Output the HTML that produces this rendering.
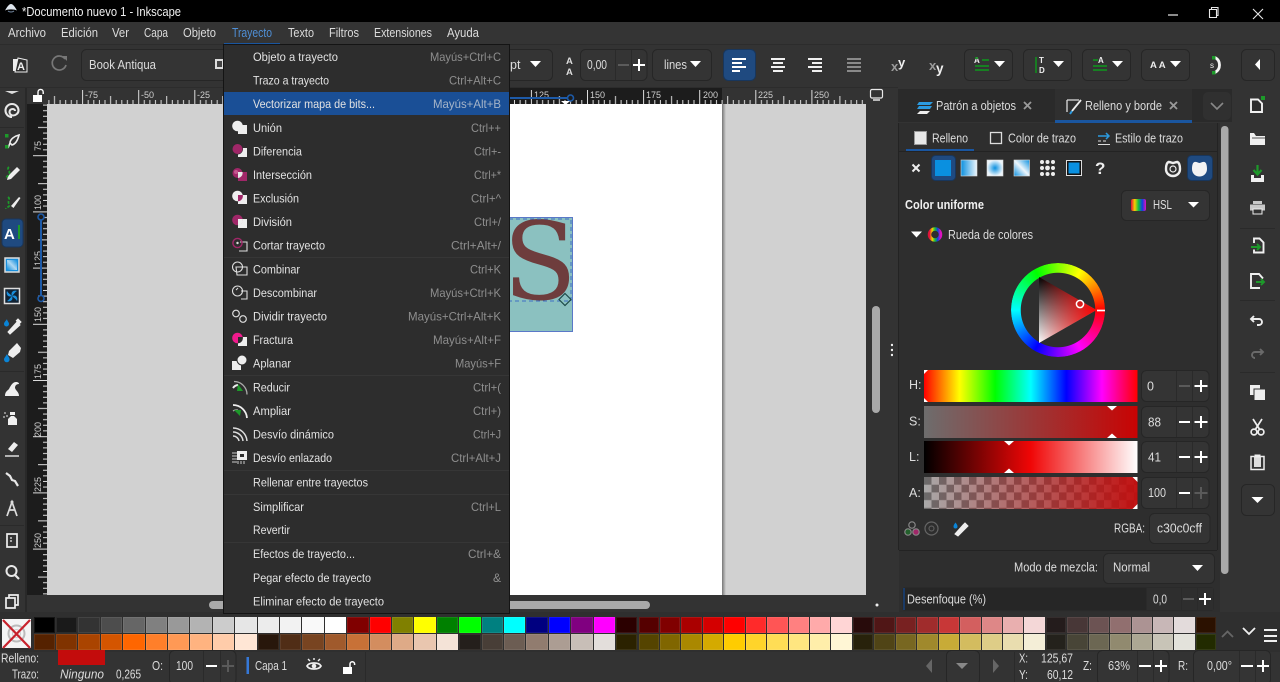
<!DOCTYPE html>
<html lang="es"><head><meta charset="utf-8"><title>Inkscape</title>
<style>
html,body{margin:0;padding:0;background:#333;width:1280px;height:682px;overflow:hidden}
svg{position:absolute;left:0;top:0;display:block}
text{font-family:"Liberation Sans",sans-serif;font-size:12.5px;fill:#dcdcdc}
.m{font-size:12.3px;fill:#e2e2e2}
.s{font-size:12px;fill:#8e8e8e;text-anchor:end}
.r{font-size:9px;fill:#cfcfcf}
.w{fill:#fff}
.l{stroke:#fff;stroke-width:2;fill:none}
.ol{stroke:#e8e8e8;stroke-width:1.3;fill:none}
.b{fill:#343434;stroke:#262626;stroke-width:1}
.sp{stroke:#2a2a2a;stroke-width:1}
.pal{position:absolute;display:flex}
.pal i{display:block;flex:1;margin:0 .5px;height:100%;box-shadow:inset 0 0 0 1px rgba(255,255,255,.08)}
</style></head><body>
<svg width="1280" height="682" viewBox="0 0 1280 682" xmlns="http://www.w3.org/2000/svg">
<defs>
<pattern id="hr" width="56.1" height="16" patternUnits="userSpaceOnUse" x="26" y="88">
<path d="M.5 2V16M6.1 12V16M11.7 12V16M17.3 12V16M22.9 12V16M28.5 8V16M34.1 12V16M39.7 12V16M45.3 12V16M50.9 12V16" stroke="#ddd" fill="none"/>
</pattern>
<pattern id="vr" width="20" height="56.2" patternUnits="userSpaceOnUse" x="27" y="99">
<path d="M6 .5H20M16 6.1H20M16 11.7H20M16 17.3H20M16 22.9H20M11 28.5H20M16 34.1H20M16 39.7H20M16 45.3H20M16 50.9H20" stroke="#ddd" fill="none"/>
</pattern>
<linearGradient id="hue"><stop offset="0" stop-color="#f00"/><stop offset=".1667" stop-color="#ff0"/><stop offset=".3333" stop-color="#0f0"/><stop offset=".5" stop-color="#0ff"/><stop offset=".6667" stop-color="#00f"/><stop offset=".8333" stop-color="#f0f"/><stop offset="1" stop-color="#f00"/></linearGradient>
<linearGradient id="sat"><stop offset="0" stop-color="#6d6d6d"/><stop offset="1" stop-color="#c80303"/></linearGradient>
<linearGradient id="lig"><stop offset="0" stop-color="#000"/><stop offset=".5" stop-color="#f00606"/><stop offset="1" stop-color="#fff"/></linearGradient>
<linearGradient id="alp"><stop offset="0" stop-color="#c30c0c" stop-opacity="0"/><stop offset="1" stop-color="#c30c0c" stop-opacity=".95"/></linearGradient>
<pattern id="chk" width="15" height="15.4" patternUnits="userSpaceOnUse" x="924" y="477">
<rect width="15" height="15.4" fill="#a9a9a9"/><rect width="7.5" height="7.7" fill="#6b6b6b"/><rect x="7.5" y="7.7" width="7.5" height="7.7" fill="#6b6b6b"/>
</pattern>
<linearGradient id="tv" x1="0" y1="0" x2="0" y2="1"><stop offset="0" stop-color="#000"/><stop offset="1" stop-color="#fff"/></linearGradient>
<linearGradient id="th"><stop offset="0" stop-color="#f00" stop-opacity="0"/><stop offset="1" stop-color="#f00"/></linearGradient>
<linearGradient id="gl"><stop offset="0" stop-color="#0a90e0"/><stop offset="1" stop-color="#eef6fc"/></linearGradient>
<radialGradient id="gr"><stop offset="0" stop-color="#0a90e0"/><stop offset="1" stop-color="#eef6fc"/></radialGradient>
<linearGradient id="gd" x1="0" y1="1" x2="1" y2="0"><stop offset="0" stop-color="#0a90e0"/><stop offset=".5" stop-color="#eef6fc"/><stop offset="1" stop-color="#0a90e0"/></linearGradient>
<linearGradient id="rb"><stop offset="0" stop-color="#e0103a"/><stop offset=".25" stop-color="#f5d000"/><stop offset=".5" stop-color="#10c040"/><stop offset=".75" stop-color="#1040e0"/><stop offset="1" stop-color="#e010c0"/></linearGradient>
<linearGradient id="sh"><stop offset="0" stop-color="#777"/><stop offset="1" stop-color="#d1d1d1"/></linearGradient>
</defs>

<rect width="1280" height="682" fill="#333"/>

<!-- canvas -->
<rect x="47" y="104" width="819" height="491" fill="#d1d1d1"/>
<rect x="400" y="104" width="322" height="491" fill="#fff"/>
<rect x="722" y="104" width="4" height="491" fill="url(#sh)"/>
<rect x="510" y="217.500" width="62" height="114" fill="#8bc1c0"/>
<path d="M509 217.500H572.500V331.500H509" fill="none" stroke="#5a78c8" stroke-width="1"/>
<text x="503" y="299" style="font-family:'DejaVu Serif',serif;font-size:108px;fill:#6e3d3d">S</text>
<path d="M509 219H571V301H509" fill="none" stroke="#3f6fc4" stroke-dasharray="4 3"/>
<path d="M565 293.500L571 299.500L565 305.500L559 299.500Z" fill="none" stroke="#1d4a48" stroke-width="1.2"/>

<!-- rulers -->
<rect x="27" y="88" width="839" height="16" fill="#333"/>
<rect x="400" y="88" width="322" height="16" fill="#1c1c1c"/>
<rect x="47" y="88" width="819" height="16" fill="url(#hr)"/>
<text class="r" x="85" y="98">-75</text><text class="r" x="141" y="98">-50</text><text class="r" x="197" y="98">-25</text>
<text class="r" x="534" y="98">125</text><text class="r" x="590" y="98">150</text><text class="r" x="646" y="98">175</text><text class="r" x="703" y="98">200</text><text class="r" x="758" y="98">225</text><text class="r" x="814" y="98">250</text>
<rect x="27" y="104" width="20" height="491" fill="#1c1c1c"/>
<rect x="27" y="104" width="20" height="491" fill="url(#vr)"/>
<g>
<text class="r" transform="translate(41 151) rotate(-90)">75</text>
<text class="r" transform="translate(41 210) rotate(-90)">100</text>
<text class="r" transform="translate(41 266) rotate(-90)">125</text>
<text class="r" transform="translate(41 322) rotate(-90)">150</text>
<text class="r" transform="translate(41 379) rotate(-90)">175</text>
<text class="r" transform="translate(41 437) rotate(-90)">200</text>
<text class="r" transform="translate(41 492) rotate(-90)">225</text>
<text class="r" transform="translate(41 548) rotate(-90)">250</text>
</g>
<path d="M41 217V298" stroke="#1d5aa8" stroke-width="2"/><circle cx="41" cy="217" r="3" fill="#1c1c1c" stroke="#1d5aa8" stroke-width="1.6"/><circle cx="41" cy="298.500" r="3" fill="#1c1c1c" stroke="#1d5aa8" stroke-width="1.6"/>
<path d="M500 98H568" stroke="#1d5aa8" stroke-width="2"/><circle cx="570.500" cy="98" r="3" fill="#1c1c1c" stroke="#1d5aa8" stroke-width="1.6"/>
<path d="M561 101H570L565.500 105Z" fill="#fff"/>
<!-- lock -->
<path d="M33 95h9v7h-9z" fill="#fff"/><path d="M38 95v-3a2.600 2.600 0 0 1 5.200 0v2" fill="none" stroke="#fff" stroke-width="1.4"/>
<!-- monitor -->
<rect x="870.500" y="89.500" width="12" height="8.500" rx="1.500" fill="#333" stroke="#e8e8e8" stroke-width="1.2"/><path d="M873 100h7" stroke="#e8e8e8" stroke-width="1.5"/>

<!-- canvas scrollbars -->
<rect x="866" y="104" width="27" height="500" fill="#333"/>
<rect x="872" y="306" width="8" height="107" rx="4" fill="#a9a9a9"/>
<circle cx="892" cy="345" r="1.2" fill="#eee"/><circle cx="892" cy="350" r="1.2" fill="#eee"/><circle cx="892" cy="355" r="1.2" fill="#eee"/>
<rect x="27" y="595" width="866" height="17" fill="#333"/>
<rect x="209" y="601" width="441" height="8" rx="4" fill="#a9a9a9"/>
<circle cx="877" cy="605" r="1.500" fill="#eee"/>

<!-- title bar -->
<rect width="1280" height="22" fill="#000"/>
<path d="M5 10.500C7 7 9 4 11 4s4 3 6 6.500C14 9 8 9 5 10.500Z" fill="#dfe6ee"/><path d="M8 11c2 1.400 4 1.400 6 0" stroke="#7a8fa8" fill="none"/>
<text x="22" y="16" textLength="159" lengthAdjust="spacingAndGlyphs" style="font-size:12.500px;fill:#f0f0f0">*Documento nuevo 1 - Inkscape</text>
<path d="M1168 15h10" stroke="#e8e8e8" stroke-width="1.2"/>
<path d="M1209.500 9.500h7v8h-7zM1211.500 9.500v-2h6.500v8h-2" fill="none" stroke="#e8e8e8" stroke-width="1.1"/>
<path d="M1253 9l10 10M1263 9l-10 10" stroke="#e8e8e8" stroke-width="1.1"/>

<!-- menu bar -->
<rect y="22" width="1280" height="23" fill="#343434"/>
<path d="M0 44.500H1280" stroke="#2c2c2c"/>
<g>
<text x="8" y="37" textLength="38" lengthAdjust="spacingAndGlyphs">Archivo</text>
<text x="61" y="37" textLength="37" lengthAdjust="spacingAndGlyphs">Edición</text>
<text x="112" y="37" textLength="17" lengthAdjust="spacingAndGlyphs">Ver</text>
<text x="144" y="37" textLength="24" lengthAdjust="spacingAndGlyphs">Capa</text>
<text x="183" y="37" textLength="33" lengthAdjust="spacingAndGlyphs">Objeto</text>
<text x="232" y="37" textLength="40" lengthAdjust="spacingAndGlyphs" style="fill:#4f8fd6">Trayecto</text>
<text x="288" y="37" textLength="26" lengthAdjust="spacingAndGlyphs">Texto</text>
<text x="329" y="37" textLength="30" lengthAdjust="spacingAndGlyphs">Filtros</text>
<text x="374" y="37" textLength="58" lengthAdjust="spacingAndGlyphs">Extensiones</text>
<text x="447" y="37" textLength="32" lengthAdjust="spacingAndGlyphs">Ayuda</text>
</g>

<!-- top toolbar -->
<rect y="45" width="1280" height="43" fill="#333"/>
<path d="M0 87.500H898" stroke="#2c2c2c"/>
<path d="M13 59h8v12h-8z" fill="#eee"/><path d="M18 58l9 2v12h-12z" fill="#2e2e2e" stroke="#eee"/><text x="17" y="70" style="font-size:11px;font-weight:bold;fill:#eee">A</text>
<path d="M65 59a7 7 0 1 0 1 6" fill="none" stroke="#777" stroke-width="1.7"/><path d="M62 56l5 0v5z" fill="#777"/>
<rect x="81.500" y="49.500" width="150" height="31" rx="5" class="b"/>
<text x="89" y="69" textLength="67" lengthAdjust="spacingAndGlyphs">Book Antiqua</text>
<rect x="215" y="59" width="9" height="10" fill="#ddd"/><rect x="217" y="61" width="5" height="6" fill="#444"/>
<rect x="490.500" y="49.500" width="62" height="31" rx="5" class="b"/>
<text x="510" y="69">pt</text><path d="M530 61h11l-5.500 6z" class="w"/>
<text x="566" y="64" style="font-size:9.500px;font-weight:bold;fill:#ddd">A</text><text x="566" y="75" style="font-size:9.500px;font-weight:bold;fill:#ddd">A</text>
<rect x="580.500" y="49.500" width="66.500" height="31" rx="5" class="b"/>
<path d="M615.500 50v30M631.500 50v30" class="sp"/>
<text x="587" y="69" textLength="20" lengthAdjust="spacingAndGlyphs">0,00</text>
<path d="M618 65h11" stroke="#5b5b5b" stroke-width="2"/><path d="M633 65h12M639 59v12" class="l"/>
<rect x="652.500" y="49.500" width="59" height="31" rx="5" class="b"/>
<text x="664" y="69" textLength="23" lengthAdjust="spacingAndGlyphs">lines</text><path d="M690 61h11l-5.500 6z" class="w"/>
<rect x="723.500" y="49.500" width="32" height="31" rx="5" fill="#1f4a80" stroke="#18365c"/>
<path d="M732 59h14M732 63h10M732 67h14M732 71h8" style="stroke:#fff;stroke-width:1.900px"/>
<path d="M771 59h14M773 63h10M771 67h14M773 71h10" style="stroke:#f0f0f0;stroke-width:1.900px"/>
<path d="M808 59h14M812 63h10M808 67h14M812 71h10" style="stroke:#f0f0f0;stroke-width:1.900px"/>
<path d="M847 59h14M847 63h14M847 67h14M847 71h14" style="stroke:#8a8a8a;stroke-width:1.900px"/>
<text x="891" y="71" style="font-size:13px;font-weight:bold;fill:#9a9a9a">x</text><text x="898" y="67" style="font-size:13px;font-weight:bold;fill:#f0f0f0">y</text>
<text x="929" y="70" style="font-size:13px;font-weight:bold;fill:#9a9a9a">x</text><text x="936" y="73" style="font-size:13.500px;font-weight:bold;fill:#f0f0f0">y</text>
<g>
<rect x="964.500" y="49.500" width="48" height="31" rx="5" class="b"/><text x="974" y="63" style="font-size:8px;font-weight:bold;fill:#eee">A</text><path d="M975 58h3M982 60h7M975 66h14M975 70h14" stroke="#138a1f" stroke-width="1.700"/><path d="M994 61h11l-5.500 6z" class="w"/>
<rect x="1023.500" y="49.500" width="48" height="31" rx="5" class="b"/><text x="1039" y="63" style="font-size:8px;font-weight:bold;fill:#eee">T</text><text x="1039" y="73" style="font-size:8px;font-weight:bold;fill:#eee">D</text><path d="M1036 57v16" stroke="#138a1f" stroke-width="1.700"/><path d="M1053 61h11l-5.500 6z" class="w"/>
<rect x="1082.500" y="49.500" width="48" height="31" rx="5" class="b"/><text x="1098" y="63" style="font-size:8px;font-weight:bold;fill:#eee">A</text><path d="M1093 60h5M1093 66h14M1093 70h14" stroke="#138a1f" stroke-width="1.700"/><path d="M1112 61h11l-5.500 6z" class="w"/>
<rect x="1141.500" y="49.500" width="48" height="31" rx="5" class="b"/><text x="1150" y="68" style="font-size:9.500px;font-weight:bold;fill:#eee">A A</text><path d="M1170 61h11l-5.500 6z" class="w"/>
</g>
<path d="M1215 57.500a8.500 8.500 0 0 1 0 15" fill="none" stroke="#f5f5f5" stroke-width="2.800"/><rect x="1212" y="56" width="3.500" height="3.500" fill="#1d9a2a"/><rect x="1212" y="71" width="3.500" height="3.500" fill="#1d9a2a"/><text x="1210" y="68" style="font-size:8px;fill:#eee">s</text>
<rect x="1241.500" y="49.500" width="33" height="31" rx="5" class="b"/><path d="M1260 59v11l-5-5.500z" class="w"/>

<!-- left toolbar -->
<rect y="88" width="25" height="524" fill="#333"/>
<rect x="25" y="88" width="2" height="524" fill="#292929"/>
<path d="M0 127.500H24M0 371.500H24M0 525.500H24" class="sp"/>
<path d="M5 91h14l-7 3z" fill="#ddd"/>
<path d="M12 117a6.500 6.500 0 1 1 6.500-6.500c0 3-3 5-5.500 5a3.500 3.500 0 0 1-3.500-3.500c0-2 1.500-3 3.500-3a2 2 0 0 1 2 2" fill="none" stroke="#e8e8e8" stroke-width="2.100"/>
<path d="M10 143c0-4 5-7 9-8-1 4-3 9-7 10zM10 143l-2 5" fill="none" stroke="#eee" stroke-width="1.600"/><rect x="5" y="134" width="3.500" height="3.500" fill="#1d9a2a"/><rect x="5" y="145" width="3.500" height="3.500" fill="#1d9a2a"/>
<path d="M8 176l9-9 3 3-9 9-4 1z" fill="#eee"/><path d="M9 167c-3 2 2 4 0 7s-3 3-3 5" fill="none" stroke="#1d9a2a" stroke-width="1.800" stroke-dasharray="3 1.500"/>
<path d="M11 206l8-9 1.500 1-7 10z" fill="#eee"/><path d="M8 197c3 2-1 4 1 7s-3 3-3 5" fill="none" stroke="#1d9a2a" stroke-width="1.800" stroke-dasharray="3 1.500"/>
<rect x="2" y="219" width="21" height="28" rx="4" fill="#1f4a80" stroke="#18365c"/>
<text x="4" y="239" style="font-size:15px;font-weight:bold;fill:#fff">A</text><path d="M19 225v14" stroke="#1d9a2a" stroke-width="2"/>
<rect x="5" y="258" width="14" height="14" fill="#1a8fdc" stroke="#ddd" stroke-width="1.500"/><rect x="7" y="260" width="10" height="10" fill="url(#gd)" opacity=".7"/>
<rect x="4.500" y="288.500" width="15" height="15" fill="#123" stroke="#ddd" stroke-width="1.500"/><path d="M12 296c-2-5 3-6 5-5-2 1-3 3-5 5zM12 296c5-2 6 3 5 5-1-2-3-3-5-5zM12 296c2 5-3 6-5 5 2-1 3-3 5-5zM12 296c-5 2-6-3-5-5 1 2 3 3 5 5z" fill="#1a8fdc"/>
<path d="M8 332l9-10 3 3-10 9zM16 321l2-2 3 3-2 2" fill="#eee" stroke="#eee"/><path d="M7 319c-1 2-3 3-3 5a2.500 2.500 0 0 0 5 0c0-2-2-3-2-5z" fill="#0a84d6"/>
<path d="M9 351l8-8 4 5-1 4-7 6-5-3z" fill="#eee"/><path d="M7 354c-1 2-3 4-3 5.500a2.800 2.800 0 0 0 5.600 0c0-2-2-3.500-2.600-5.500z" fill="#0a84d6"/>
<path d="M5 396c0-4 2-5 4-7 2-4 4-7 7-7 2 0 3 1 3 2-3 0-4 2-4 4 1 3 4 4 4 8z" fill="#f0f0f0"/>
<path d="M8 425v-6l3-3h3l3 3v6z" fill="#f0f0f0"/><rect x="10" y="412" width="5" height="3" fill="#f0f0f0"/><path d="M4 413h2M3 417h2M6 416h2" stroke="#aaa" stroke-width="1.500"/>
<path d="M8 449l6-7 4 3-6 7z" fill="#eee"/><path d="M5 456h14" stroke="#ddd" stroke-width="1.500"/>
<path d="M6 473l4 3 2 4 3 1 3 5" fill="none" stroke="#e8e8e8" stroke-width="2.200"/>
<path d="M7 516l5-14 5 14M9 510h6" fill="none" stroke="#ddd" stroke-width="1.700"/><circle cx="12" cy="502" r="1.500" fill="#ddd"/>
<path d="M7 534h10v13H7z" fill="none" stroke="#eee" stroke-width="1.700"/><path d="M10 538h2M10 541h2" stroke="#eee" stroke-width="1.300"/>
<circle cx="11.500" cy="571" r="5" fill="none" stroke="#e8e8e8" stroke-width="2"/><path d="M15 575l4 4" stroke="#e8e8e8" stroke-width="2.200"/>
<path d="M6 598h9v10H6z" fill="none" stroke="#eee" stroke-width="1.700"/><path d="M9 598v-3h9v10h-3" fill="none" stroke="#eee" stroke-width="1.700"/>

<!-- dock -->
<rect x="893" y="88" width="5" height="524" fill="#333"/>
<rect x="898" y="89" width="334" height="33" fill="#2a2a2a"/>
<rect x="1055" y="89" width="137" height="31" fill="#2f2f2f"/>
<rect x="1055" y="120" width="137" height="3" fill="#1a56a0"/>
<path d="M919 102h14l-3 3h-13zM919 106h13l-2 3h-13z" fill="#2c9be0"/><path d="M920 111h10l-3 3h-10z" fill="#eee"/>
<text x="936" y="110" textLength="80" lengthAdjust="spacingAndGlyphs">Patrón a objetos</text>
<path d="M1024 102l7 7M1031 102l-7 7" stroke="#9a9a9a" stroke-width="1.800"/>
<path d="M1067 100h12M1067 100v12" fill="none" stroke="#ddd" stroke-width="1.300"/><path d="M1081 100l-9 11" stroke="#eee" stroke-width="1.800"/><path d="M1072 111l-2 3" stroke="#2c9be0" stroke-width="2"/>
<text x="1085" y="110" textLength="77" lengthAdjust="spacingAndGlyphs">Relleno y borde</text>
<path d="M1170 102l7 7M1177 102l-7 7" stroke="#9a9a9a" stroke-width="1.800"/>
<rect x="1203" y="92" width="28" height="28" rx="5" fill="#303030"/>
<path d="M1211 103l6 6 6-6" fill="none" stroke="#888" stroke-width="1.600"/>

<rect x="899" y="123" width="321" height="489" fill="#2e2e2e"/>
<path d="M898.500 123V550" stroke="#232323"/><path d="M1217.500 123V550" stroke="#232323"/>
<rect x="1221" y="126" width="7.500" height="448" rx="3.500" fill="#a9a9a9"/>

<!-- sub tabs -->
<rect x="914.500" y="131.500" width="12" height="13" fill="#e8e8e8" stroke="#999"/>
<text x="932" y="142.500" textLength="36" lengthAdjust="spacingAndGlyphs">Relleno</text>
<rect x="906" y="149" width="68" height="2" fill="#1a56a0"/>
<rect x="990.500" y="132.500" width="11" height="11" fill="none" stroke="#ddd" stroke-width="1.300"/>
<text x="1008" y="142.500" textLength="68" lengthAdjust="spacingAndGlyphs">Color de trazo</text>
<path d="M1098 136h11M1106 133l3 3-3 3" fill="none" stroke="#2c9be0" stroke-width="1.500"/><path d="M1098 141h3M1103 141h3M1098 144.500h12" stroke="#ddd"/>
<text x="1115" y="142.500" textLength="68" lengthAdjust="spacingAndGlyphs">Estilo de trazo</text>
<path d="M899 151.500H1217" stroke="#232323"/>

<!-- paint row -->
<path d="M912.500 164.500l7 7M919.500 164.500l-7 7" stroke="#eee" stroke-width="2"/>
<rect x="931.500" y="155.500" width="24" height="25" rx="4" fill="#1f4a80" stroke="#18365c"/>
<rect x="935" y="160" width="16" height="16" fill="#0a90e0"/>
<rect x="961" y="160" width="16" height="16" fill="url(#gl)" stroke="#ddd" stroke-width=".6"/>
<rect x="987" y="160" width="16" height="16" fill="url(#gr)" stroke="#ddd" stroke-width=".6"/>
<rect x="1014" y="160" width="15.500" height="16" fill="url(#gd)" stroke="#ddd" stroke-width=".6"/>
<g fill="#eee"><circle cx="1042" cy="162" r="2"/><circle cx="1047.500" cy="162" r="2"/><circle cx="1053" cy="162" r="2"/><circle cx="1042" cy="168" r="2"/><circle cx="1053" cy="168" r="2"/><circle cx="1047.500" cy="168" r="2.400"/><circle cx="1042" cy="174" r="2"/><circle cx="1047.500" cy="174" r="2"/><circle cx="1053" cy="174" r="2"/></g>
<rect x="1066.500" y="160.500" width="15" height="15" fill="#111" stroke="#ddd"/><rect x="1068.500" y="162.500" width="11" height="11" fill="#0a90e0"/>
<text x="1095" y="174" style="font-size:17px;font-weight:bold;fill:#eee">?</text>
<path d="M1173 176c-3.500 0-7-2.500-7-7 0-3 .5-6 2.500-7 2 0 3 1 4.500 1s2.500-1 4.500-1c2 1 2.500 4 2.500 7 0 4.500-3.500 7-7 7z" fill="none" stroke="#eee" stroke-width="2.400"/><circle cx="1173" cy="169" r="3" fill="none" stroke="#eee" stroke-width="1.200"/>
<rect x="1187.500" y="155.500" width="25" height="25" rx="4" fill="#1f4a80" stroke="#18365c"/>
<path d="M1199.500 176.500c-4 0-7.500-3-7.500-7.500 0-3 .5-6.500 2.500-7 2-.5 3.500 1 5 1s3-1.500 5-1c2 .5 2.500 4 2.500 7 0 4.500-3.500 7.500-7.500 7.500z" fill="#f3f3f3"/>

<!-- colour mode -->
<text x="905" y="209" textLength="79" lengthAdjust="spacingAndGlyphs" style="font-weight:bold;fill:#f0f0f0">Color uniforme</text>
<rect x="1121.500" y="190.500" width="88" height="30" rx="5" class="b"/>
<rect x="1131" y="199" width="15" height="12" rx="2" fill="url(#rb)"/>
<text x="1153" y="209" textLength="19" lengthAdjust="spacingAndGlyphs">HSL</text>
<path d="M1188 202h11l-5.500 5.500z" class="w"/>
<path d="M911 231.500h11l-5.500 6z" class="w"/>
<circle cx="935" cy="234.500" r="5.500" fill="none" stroke="url(#rb)" stroke-width="3.500"/>
<text x="948" y="239" textLength="85" lengthAdjust="spacingAndGlyphs">Rueda de colores</text>

<foreignObject x="1011" y="263" width="94" height="94"><div xmlns="http://www.w3.org/1999/xhtml" style="width:94px;height:94px;border-radius:50%;background:conic-gradient(from 90deg,#f00,#f0f,#00f,#0ff,#0f0,#ff0,#f00);-webkit-mask:radial-gradient(circle,transparent 37px,#000 37.500px);mask:radial-gradient(circle,transparent 37px,#000 37.500px)"></div></foreignObject>
<path d="M1039 277L1096.500 310L1039 343Z" fill="url(#tv)"/>
<path d="M1039 277L1096.500 310L1039 343Z" fill="url(#th)"/>
<circle cx="1080" cy="304" r="3.600" fill="none" stroke="#fff" stroke-width="1.500"/>
<path d="M1097 310.500h8" stroke="#fff" stroke-width="1.700"/>

<!-- sliders -->
<g>
<text x="909" y="389">H:</text><text x="909" y="425.500">S:</text><text x="909" y="461">L:</text><text x="909" y="497">A:</text>
</g>
<rect x="924" y="370" width="213.500" height="32" fill="url(#hue)"/>
<rect x="924" y="406" width="213.500" height="32" fill="url(#sat)"/>
<rect x="924" y="441" width="213.500" height="32" fill="url(#lig)"/>
<rect x="924" y="477" width="213.500" height="32" fill="url(#chk)"/>
<rect x="924" y="477" width="213.500" height="32" fill="url(#alp)"/>
<path d="M924 370h4l-4 4zM924 402h4l-4-4z" class="w"/>
<path d="M1132.500 477h5v5zM1137.500 509h-5l5-5z" class="w"/>
<path d="M1107 406h10l-5 4.500zM1107 438h10l-5-4.500z" class="w"/>
<path d="M1004 441h10l-5 4.500zM1004 473h10l-5-4.500z" class="w"/>
<g>
<rect x="1141.500" y="370.500" width="67.500" height="31" rx="5" class="b"/><path d="M1176.500 371v30M1192.500 371v30" class="sp"/><text x="1147" y="390.500">0</text><path d="M1179 386h11" stroke="#5a5a5a" stroke-width="2"/><path d="M1194.500 386h13M1201 380v12" class="l"/>
<rect x="1141.500" y="406.500" width="67.500" height="31" rx="5" class="b"/><path d="M1176.500 407v30M1192.500 407v30" class="sp"/><text x="1148" y="426.500" textLength="13" lengthAdjust="spacingAndGlyphs">88</text><path d="M1179 422h11M1194.500 422h13M1201 416v12" class="l"/>
<rect x="1141.500" y="441.500" width="67.500" height="31" rx="5" class="b"/><path d="M1176.500 442v30M1192.500 442v30" class="sp"/><text x="1148" y="461.500" textLength="13" lengthAdjust="spacingAndGlyphs">41</text><path d="M1179 457h11M1194.500 457h13M1201 451v12" class="l"/>
<rect x="1141.500" y="477.500" width="67.500" height="31" rx="5" class="b"/><path d="M1176.500 478v30M1192.500 478v30" class="sp"/><text x="1148" y="497" textLength="18" lengthAdjust="spacingAndGlyphs">100</text><path d="M1179 493h11" class="l"/><path d="M1194.500 493h13M1201 487v12" fill="none" stroke="#5a5a5a" stroke-width="2"/>
</g>
<!-- bottom of colour notebook -->
<circle cx="912" cy="525" r="3.200" fill="none" stroke="#888" stroke-width="1.200"/><circle cx="908" cy="532" r="3.200" fill="#23602c" stroke="#888" stroke-width="1.200"/><circle cx="916" cy="532" r="3.200" fill="#a02768" stroke="#888" stroke-width="1.200"/>
<circle cx="931.500" cy="528.500" r="6.500" fill="none" stroke="#666" stroke-width="1.200"/><circle cx="931.500" cy="528.500" r="2.500" fill="none" stroke="#666"/>
<path d="M955 534l8-9 3 3-8 8zM963 525l2-2 3 3-2 2" fill="#eee" stroke="#eee"/><path d="M955.500 522.500c-1 1.500-2 2.500-2 4a2 2 0 0 0 4 0c0-1.500-1-2.500-2-4z" fill="#0a84d6"/>
<text x="1114" y="532.500" textLength="31" lengthAdjust="spacingAndGlyphs">RGBA:</text>
<rect x="1149.500" y="513.500" width="60.500" height="30" rx="5" class="b"/>
<text x="1157" y="532.500" textLength="45" lengthAdjust="spacingAndGlyphs">c30c0cff</text>
<path d="M899 550.500H1217" stroke="#232323"/>
<text x="1014" y="571.500" textLength="84" lengthAdjust="spacingAndGlyphs">Modo de mezcla:</text>
<rect x="1103.500" y="553.500" width="111" height="30" rx="5" class="b"/>
<text x="1113" y="571.500" textLength="37" lengthAdjust="spacingAndGlyphs">Normal</text>
<path d="M1192 565h11l-5.500 6z" class="w"/>
<rect x="902.500" y="587.500" width="311" height="23" rx="3" fill="#262626" stroke="#2a2a2a"/>
<rect x="903" y="588" width="2" height="22" fill="#1a3a66"/>
<rect x="1146" y="588" width="67" height="22" fill="#2e2e2e"/>
<path d="M1146.500 588v22M1181.500 588v22M1197.500 588v22" class="sp"/>
<text x="907" y="603.500" textLength="79" lengthAdjust="spacingAndGlyphs">Desenfoque (%)</text>
<text x="1153" y="603.500" textLength="14" lengthAdjust="spacingAndGlyphs">0,0</text>
<path d="M1183 599h11" stroke="#5a5a5a" stroke-width="2"/><path d="M1199 599h12M1205 593v12" class="l"/>

<!-- right toolbar -->
<rect x="1232" y="88" width="48" height="524" fill="#333"/>
<path d="M1240 228.500H1275M1240 300.500H1275M1240 372.500H1275" class="sp"/>
<path d="M1251 99.500h7l4 4v8.500h-11z" fill="#2e2e2e" stroke="#f2f2f2" stroke-width="1.900"/><rect x="1261" y="96" width="4" height="4" fill="#1d9a2a"/>
<path d="M1250 133v12h15v-9h-9l-2-3z" fill="#f0f0f0"/><path d="M1252 138h13" stroke="#555"/>
<path d="M1251 175v7h13v-7h-3v3h-7v-3z" fill="#f0f0f0"/><path d="M1257.500 165v9M1253.500 170l4 4.500 4-4.500" fill="none" stroke="#1d9a2a" stroke-width="2.200"/>
<rect x="1253" y="201" width="9" height="3" fill="#c8c8c8"/><rect x="1250" y="204.500" width="15" height="6" fill="#c8c8c8"/><rect x="1253" y="209" width="9" height="5" fill="#333" stroke="#eee"/>
<path d="M1254 243v-4.500h5.500l4 4v10h-9.500v-3" fill="none" stroke="#f0f0f0" stroke-width="1.900"/><path d="M1251 247h9M1257 244l3 3-3 3" fill="none" stroke="#1d9a2a" stroke-width="1.900"/>
<path d="M1263 278.500l-4-4.500h-8v14h9" fill="none" stroke="#f0f0f0" stroke-width="1.900"/><path d="M1256 282h8M1261 279l3 3-3 3" fill="none" stroke="#1d9a2a" stroke-width="1.900"/>
<path d="M1254 316l-3 3 3 3M1251 319h8a3 3 0 0 1 0 6h-2" fill="none" stroke="#eee" stroke-width="1.900"/>
<path d="M1260 349l3 3-3 3M1263 352h-8a3 3 0 0 0 0 6h-1" fill="none" stroke="#6a6a6a" stroke-width="1.900"/>
<rect x="1250" y="385" width="10" height="10" fill="#eee"/><rect x="1254" y="389" width="11.500" height="11.500" fill="#eee" stroke="#333"/>
<circle cx="1254" cy="432" r="2.900" fill="none" stroke="#eee" stroke-width="1.700"/><circle cx="1261" cy="432" r="2.900" fill="none" stroke="#eee" stroke-width="1.700"/><path d="M1255 430l7-11M1260 430l-7-11" stroke="#eee" stroke-width="1.700"/>
<rect x="1251" y="456.500" width="13" height="13" fill="none" stroke="#eee" stroke-width="1.500"/><rect x="1254" y="456" width="7" height="11" fill="#ddd"/><rect x="1254.500" y="454.500" width="6" height="3" fill="#eee"/>
<rect x="1241.500" y="484.500" width="33" height="31" rx="5" class="b"/><path d="M1251.500 497h12l-6 6z" class="w"/>

<!-- palette backdrop -->
<rect y="612" width="1280" height="40" fill="#2f2f2f"/>
<rect x="2" y="619" width="29" height="29" fill="#f4f4f4"/>
<circle cx="16.500" cy="633.500" r="8" fill="none" stroke="#bbb" stroke-width="2"/><circle cx="16.500" cy="633.500" r="4" fill="none" stroke="#ccc"/>
<path d="M3 620l27 28M30 620L3 648" stroke="#c8222c" stroke-width="2.200"/>
<path d="M1222 637l5.500-5.500 5.500 5.500" fill="none" stroke="#666" stroke-width="1.800"/>
<path d="M1243 628l6 6 6-6" fill="none" stroke="#f0f0f0" stroke-width="1.800"/>
<path d="M1264 630h13M1264 636h13M1264 641h13" stroke="#f0f0f0" stroke-width="2"/>

<!-- status bar -->
<rect y="652" width="1280" height="30" fill="#333"/>
<text x="1" y="662.500" textLength="38" lengthAdjust="spacingAndGlyphs">Relleno:</text>
<rect x="58" y="650" width="47" height="15" fill="#c30c0c"/>
<text x="12" y="678.500" textLength="27" lengthAdjust="spacingAndGlyphs">Trazo:</text>
<text x="60" y="678.500" textLength="44" lengthAdjust="spacingAndGlyphs" style="font-style:italic">Ninguno</text>
<text x="116" y="678.500" textLength="25" lengthAdjust="spacingAndGlyphs">0,265</text>
<text x="152" y="670" textLength="11" lengthAdjust="spacingAndGlyphs">O:</text>
<rect x="169.500" y="650.500" width="66.500" height="34" rx="5" class="b"/>
<path d="M203.500 651v31M220.500 651v31" class="sp"/>
<text x="176" y="670" textLength="17" lengthAdjust="spacingAndGlyphs">100</text>
<path d="M206 666h11" class="l"/><path d="M222 666h12M228 660v12" fill="none" stroke="#5a5a5a" stroke-width="2"/>
<rect x="246.500" y="657" width="2.500" height="17" fill="#3578d8"/>
<text x="255" y="670" textLength="32" lengthAdjust="spacingAndGlyphs">Capa 1</text>
<path d="M307 666c2-4 12-4 14 0-2 4-12 4-14 0z" fill="none" stroke="#eee" stroke-width="1.800"/><circle cx="314" cy="666" r="2.300" fill="#eee"/><path d="M308 659l2 2M314 658v2M320 659l-2 2" stroke="#eee" stroke-width="1.400"/>
<rect x="343" y="667" width="9" height="7" fill="#fff"/><path d="M350 667v-3a2.300 2.300 0 0 1 4.600 0v1" fill="none" stroke="#fff" stroke-width="1.500"/>
<path d="M365.500 652v30" class="sp"/>
<path d="M932 659v14l-6-7z" fill="#666"/>
<rect x="946.500" y="650.500" width="33" height="34" rx="5" class="b"/>
<path d="M956 663h12l-6 6z" fill="#888"/>
<path d="M993 659v14l6-7z" fill="#666"/>
<path d="M1014.500 652v30" class="sp"/>
<text x="1019" y="662.500" textLength="9" lengthAdjust="spacingAndGlyphs">X:</text>
<text x="1019" y="679" textLength="9" lengthAdjust="spacingAndGlyphs">Y:</text>
<text x="1041" y="662.500" textLength="32" lengthAdjust="spacingAndGlyphs">125,67</text>
<text x="1047" y="679" textLength="26" lengthAdjust="spacingAndGlyphs">60,12</text>
<text x="1083" y="670" textLength="9" lengthAdjust="spacingAndGlyphs">Z:</text>
<rect x="1097.500" y="650.500" width="71.500" height="34" rx="5" class="b"/>
<path d="M1137.500 651v31M1153.500 651v31" class="sp"/>
<text x="1108" y="670" textLength="22" lengthAdjust="spacingAndGlyphs">63%</text>
<path d="M1139 666h12M1155 666h12M1161 660v12" class="l"/>
<text x="1178" y="670" textLength="10" lengthAdjust="spacingAndGlyphs">R:</text>
<rect x="1193.500" y="650.500" width="77" height="34" rx="5" class="b"/>
<path d="M1239.500 651v31M1255.500 651v31" class="sp"/>
<text x="1207" y="670" textLength="25" lengthAdjust="spacingAndGlyphs">0,00°</text>
<path d="M1241 666h12M1257 666h12M1263 660v12" class="l"/>

<!-- Trayecto menu -->
<rect x="224" y="43" width="56" height="2" fill="#1a56a0"/>
<rect x="223.500" y="44.500" width="286" height="569" fill="#2d2d2d" stroke="#141414"/>
<rect x="224" y="92" width="285" height="23" fill="#1a4f96"/>
<path d="M224 257.500H509M224 375.500H509M224 470.500H509M224 494.500H509M224 542.500H509" stroke="#363636"/>
<g>
<text class="m" x="253" y="61" textLength="85" lengthAdjust="spacingAndGlyphs">Objeto a trayecto</text><text class="s" x="501" y="61" textLength="71" lengthAdjust="spacingAndGlyphs">Mayús+Ctrl+C</text>
<text class="m" x="253" y="84.500" textLength="76" lengthAdjust="spacingAndGlyphs">Trazo a trayecto</text><text class="s" x="501" y="84.500" textLength="52" lengthAdjust="spacingAndGlyphs">Ctrl+Alt+C</text>
<text class="m" x="253" y="108" textLength="122" lengthAdjust="spacingAndGlyphs">Vectorizar mapa de bits...</text><text class="s" x="501" y="108" textLength="68" lengthAdjust="spacingAndGlyphs" style="fill:#a5b4c8">Mayús+Alt+B</text>
<text class="m" x="253" y="132" textLength="29" lengthAdjust="spacingAndGlyphs">Unión</text><text class="s" x="501" y="132" textLength="30" lengthAdjust="spacingAndGlyphs">Ctrl++</text>
<text class="m" x="253" y="155.500" textLength="49" lengthAdjust="spacingAndGlyphs">Diferencia</text><text class="s" x="501" y="155.500" textLength="27" lengthAdjust="spacingAndGlyphs">Ctrl+-</text>
<text class="m" x="253" y="179" textLength="59" lengthAdjust="spacingAndGlyphs">Intersección</text><text class="s" x="501" y="179" textLength="27" lengthAdjust="spacingAndGlyphs">Ctrl+*</text>
<text class="m" x="253" y="202.500" textLength="46" lengthAdjust="spacingAndGlyphs">Exclusión</text><text class="s" x="501" y="202.500" textLength="30" lengthAdjust="spacingAndGlyphs">Ctrl+^</text>
<text class="m" x="253" y="226" textLength="39" lengthAdjust="spacingAndGlyphs">División</text><text class="s" x="501" y="226" textLength="27" lengthAdjust="spacingAndGlyphs">Ctrl+/</text>
<text class="m" x="253" y="249.500" textLength="72" lengthAdjust="spacingAndGlyphs">Cortar trayecto</text><text class="s" x="501" y="249.500" textLength="50" lengthAdjust="spacingAndGlyphs">Ctrl+Alt+/</text>
<text class="m" x="253" y="273.500" textLength="47" lengthAdjust="spacingAndGlyphs">Combinar</text><text class="s" x="501" y="273.500" textLength="31" lengthAdjust="spacingAndGlyphs">Ctrl+K</text>
<text class="m" x="253" y="297" textLength="64" lengthAdjust="spacingAndGlyphs">Descombinar</text><text class="s" x="501" y="297" textLength="71" lengthAdjust="spacingAndGlyphs">Mayús+Ctrl+K</text>
<text class="m" x="253" y="320.500" textLength="74" lengthAdjust="spacingAndGlyphs">Dividir trayecto</text><text class="s" x="501" y="320.500" textLength="93" lengthAdjust="spacingAndGlyphs">Mayús+Ctrl+Alt+K</text>
<text class="m" x="253" y="344" textLength="40" lengthAdjust="spacingAndGlyphs">Fractura</text><text class="s" x="501" y="344" textLength="68" lengthAdjust="spacingAndGlyphs">Mayús+Alt+F</text>
<text class="m" x="253" y="367.500" textLength="38" lengthAdjust="spacingAndGlyphs">Aplanar</text><text class="s" x="501" y="367.500" textLength="46" lengthAdjust="spacingAndGlyphs">Mayús+F</text>
<text class="m" x="253" y="391.500" textLength="37" lengthAdjust="spacingAndGlyphs">Reducir</text><text class="s" x="501" y="391.500" textLength="28" lengthAdjust="spacingAndGlyphs">Ctrl+(</text>
<text class="m" x="253" y="415" textLength="38" lengthAdjust="spacingAndGlyphs">Ampliar</text><text class="s" x="501" y="415" textLength="28" lengthAdjust="spacingAndGlyphs">Ctrl+)</text>
<text class="m" x="253" y="438.500" textLength="81" lengthAdjust="spacingAndGlyphs">Desvío dinámico</text><text class="s" x="501" y="438.500" textLength="28" lengthAdjust="spacingAndGlyphs">Ctrl+J</text>
<text class="m" x="253" y="462" textLength="79" lengthAdjust="spacingAndGlyphs">Desvío enlazado</text><text class="s" x="501" y="462" textLength="50" lengthAdjust="spacingAndGlyphs">Ctrl+Alt+J</text>
<text class="m" x="253" y="486.500" textLength="115" lengthAdjust="spacingAndGlyphs">Rellenar entre trayectos</text>
<text class="m" x="253" y="511" textLength="51" lengthAdjust="spacingAndGlyphs">Simplificar</text><text class="s" x="501" y="511" textLength="30" lengthAdjust="spacingAndGlyphs">Ctrl+L</text>
<text class="m" x="253" y="534" textLength="37" lengthAdjust="spacingAndGlyphs">Revertir</text>
<text class="m" x="253" y="558" textLength="102" lengthAdjust="spacingAndGlyphs">Efectos de trayecto...</text><text class="s" x="501" y="558" textLength="33" lengthAdjust="spacingAndGlyphs">Ctrl+&amp;</text>
<text class="m" x="253" y="582" textLength="118" lengthAdjust="spacingAndGlyphs">Pegar efecto de trayecto</text><text class="s" x="501" y="582">&amp;</text>
<text class="m" x="253" y="605.500" textLength="131" lengthAdjust="spacingAndGlyphs">Eliminar efecto de trayecto</text>
</g>
<!-- boolean op icons -->
<g transform="translate(0,128)"><rect x="238" y="-3" width="9" height="9" fill="#eee"/><circle cx="237.500" cy="-2" r="5.300" fill="#eee"/></g>
<g transform="translate(0,151)"><rect x="238" y="-3" width="9" height="9" fill="#eee"/><circle cx="237.500" cy="-2" r="5.500" fill="#2d2d2d"/><circle cx="237.500" cy="-2" r="5" fill="#a02768"/></g>
<g transform="translate(0,175)"><circle cx="237.500" cy="-2" r="5" fill="#a02768"/><rect x="238" y="-3" width="9" height="9" fill="#a02768"/><path d="M238-3h4.500a5 5 0 0 1-4.500 6z" fill="#e8e8e8"/><circle cx="236" cy="-3" r="2" fill="#c4578f"/></g>
<g transform="translate(0,198)"><circle cx="237.500" cy="-2" r="5.300" fill="#eee"/><rect x="238" y="-3" width="9" height="9" fill="#eee"/><path d="M238-3h4.800a5.300 5.300 0 0 1-4.800 6.300z" fill="#a02768"/></g>
<g transform="translate(0,222)"><rect x="238" y="-3" width="9" height="9" fill="#eee"/><circle cx="237.500" cy="-2" r="5.300" fill="#a02768"/><path d="M238-3h4.800a5.300 5.300 0 0 1-4.800 6.300z" fill="#eee"/></g>
<g transform="translate(0,245)"><path d="M240-3h7v9h-8" fill="none" stroke="#ddd" stroke-width="1.100"/><circle cx="237.500" cy="-2" r="4.600" fill="none" stroke="#a02768" stroke-width="1.400"/><circle cx="237.500" cy="-2" r="1.200" fill="#ddd"/></g>
<g transform="translate(0,269)" fill="none" stroke="#ddd" stroke-width="1.100"><circle cx="237.500" cy="-2" r="5"/><path d="M236-2h11v8h-10z"/></g>
<g transform="translate(0,293)" fill="none" stroke="#ddd" stroke-width="1.100"><circle cx="237.500" cy="-2" r="5"/><path d="M241-2h6v8h-6M236-3l2-2"/></g>
<g transform="translate(0,316)" fill="none" stroke="#ddd" stroke-width="1.200"><circle cx="236" cy="-2.500" r="3.300"/><circle cx="243" cy="3" r="3.300"/></g>
<g transform="translate(0,340)"><rect x="238" y="-3" width="9" height="9" fill="#eee"/><circle cx="237.500" cy="-2" r="5.300" fill="#ef1a8c"/><path d="M238-3h4.800a5.300 5.300 0 0 1-4.800 6.300z" fill="#2d2d2d"/></g>
<g transform="translate(0,363)"><path d="M232-2h9v9h-9z" fill="#eee"/><circle cx="242" cy="-3" r="5" fill="#eee" stroke="#2d2d2d"/></g>
<g transform="translate(0,387)" fill="none"><path d="M234-5.500a13 13 0 0 1 13 13" stroke="#aaa" stroke-width="1.300"/><path d="M233 1a7 7 0 0 1 5-3" stroke="#eee" stroke-width="2"/><path d="M238-3l5 7h-6z" fill="#1d9a2a"/></g>
<g transform="translate(0,411)" fill="none"><path d="M233-6a14 14 0 0 1 14 13" stroke="#eee" stroke-width="1.800"/><path d="M233 0a7 7 0 0 1 5-1" stroke="#aaa" stroke-width="1.300"/><path d="M234-1l7 0-1 6z" fill="#1d9a2a"/></g>
<g transform="translate(0,434)" fill="none" stroke="#ddd" stroke-width="1.500"><path d="M233-6a14 14 0 0 1 14 13"/><path d="M233-2a10 10 0 0 1 10 9"/><path d="M233 2a6 6 0 0 1 6 5"/></g>
<g transform="translate(0,458)"><path d="M232-5h5M232-2h5M232 1h5M232 4h5" stroke="#ccc" stroke-width="1"/><rect x="237" y="-7" width="10" height="9" fill="#eee"/><rect x="240" y="-4" width="4" height="3" fill="#2d2d2d"/><path d="M238 3v3M241 3v3M244 3v3" stroke="#ccc"/></g>
</svg>

<div class="pal" style="left:33px;top:617px;width:605px;height:16px">
<i style="background:#000"></i><i style="background:#1a1a1a"></i><i style="background:#333"></i><i style="background:#4d4d4d"></i><i style="background:#666"></i><i style="background:#808080"></i><i style="background:#999"></i><i style="background:#b3b3b3"></i><i style="background:#ccc"></i><i style="background:#e6e6e6"></i><i style="background:#ececec"></i><i style="background:#f2f2f2"></i><i style="background:#f9f9f9"></i><i style="background:#fff"></i><i style="background:#800000"></i><i style="background:#f00"></i><i style="background:#808000"></i><i style="background:#ff0"></i><i style="background:#008000"></i><i style="background:#0f0"></i><i style="background:#008080"></i><i style="background:#0ff"></i><i style="background:#000080"></i><i style="background:#00f"></i><i style="background:#800080"></i><i style="background:#f0f"></i><i style="background:#2b0000"></i>
</div>
<div class="pal" style="left:33px;top:634px;width:605px;height:16px">
<i style="background:#552200"></i><i style="background:#803300"></i><i style="background:#a40"></i><i style="background:#d45500"></i><i style="background:#f60"></i><i style="background:#ff7f2a"></i><i style="background:#f95"></i><i style="background:#ffb380"></i><i style="background:#fca"></i><i style="background:#ffe6d5"></i><i style="background:#28170b"></i><i style="background:#502d16"></i><i style="background:#784421"></i><i style="background:#a05a2c"></i><i style="background:#c87137"></i><i style="background:#d38d5f"></i><i style="background:#deaa87"></i><i style="background:#e9c6af"></i><i style="background:#f4e3d7"></i><i style="background:#241f1c"></i><i style="background:#483e37"></i><i style="background:#6c5d53"></i><i style="background:#917c6f"></i><i style="background:#ac9d93"></i><i style="background:#c8beb7"></i><i style="background:#e3dedb"></i><i style="background:#2b2200"></i>
</div>
<div class="pal" style="left:638px;top:617px;width:579px;height:16px">
<i style="background:#500"></i><i style="background:#800000"></i><i style="background:#a00"></i><i style="background:#d40000"></i><i style="background:#f00"></i><i style="background:#ff2a2a"></i><i style="background:#f55"></i><i style="background:#ff8080"></i><i style="background:#faa"></i><i style="background:#ffd5d5"></i><i style="background:#280b0b"></i><i style="background:#501616"></i><i style="background:#782121"></i><i style="background:#a02c2c"></i><i style="background:#c83737"></i><i style="background:#d35f5f"></i><i style="background:#de8787"></i><i style="background:#e9afaf"></i><i style="background:#f4d7d7"></i><i style="background:#241c1c"></i><i style="background:#483737"></i><i style="background:#6c5353"></i><i style="background:#916f6f"></i><i style="background:#ac9393"></i><i style="background:#c8b7b7"></i><i style="background:#e3dbdb"></i><i style="background:#2b1100"></i>
</div>
<div class="pal" style="left:638px;top:634px;width:579px;height:16px">
<i style="background:#540"></i><i style="background:#806600"></i><i style="background:#a80"></i><i style="background:#d4aa00"></i><i style="background:#fc0"></i><i style="background:#ffd42a"></i><i style="background:#fd5"></i><i style="background:#ffe680"></i><i style="background:#fea"></i><i style="background:#fff6d5"></i><i style="background:#28220b"></i><i style="background:#504416"></i><i style="background:#786721"></i><i style="background:#a0892c"></i><i style="background:#c8ab37"></i><i style="background:#d3bc5f"></i><i style="background:#decd87"></i><i style="background:#e9ddaf"></i><i style="background:#f4eed7"></i><i style="background:#24221c"></i><i style="background:#484537"></i><i style="background:#6c6753"></i><i style="background:#918a6f"></i><i style="background:#aca793"></i><i style="background:#c8c4b7"></i><i style="background:#e3e2db"></i><i style="background:#222b00"></i>
</div>
</body></html>
